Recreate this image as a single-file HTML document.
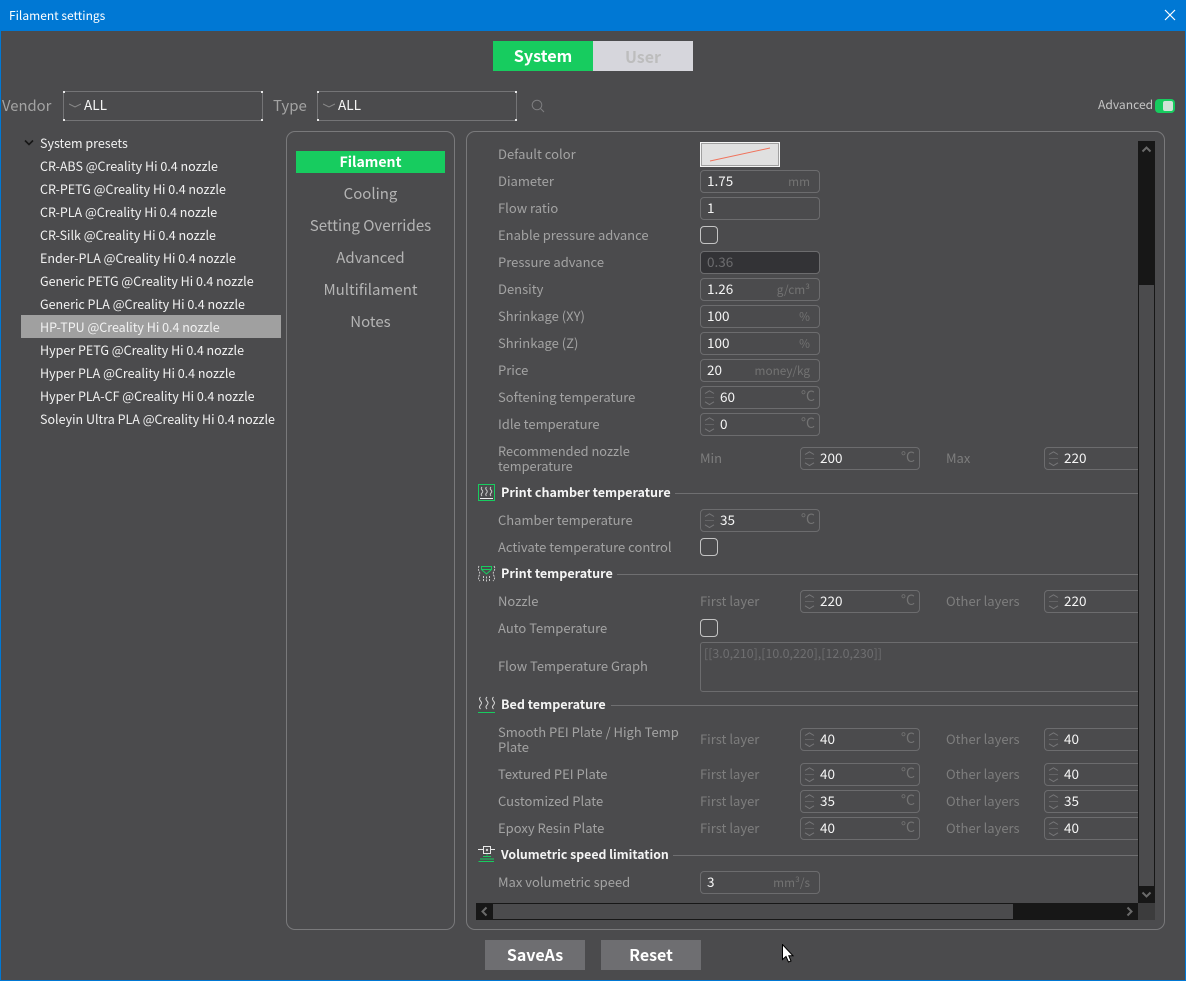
<!DOCTYPE html>
<html><head><meta charset="utf-8"><title>Filament settings</title>
<style>
html,body{margin:0;padding:0;width:1186px;height:981px;overflow:hidden;background:#4b4b4d}
body{position:relative;font-family:"Noto Sans CJK SC","Liberation Sans",sans-serif;font-size:13px;color:#a6a6a6}
div,span,svg{position:absolute;box-sizing:border-box}
.t{white-space:nowrap;line-height:20px;height:20px}
.w{color:#f2f2f2;left:40px;font-size:12.5px}
.l{left:498px;color:#a3a3a3}
.d{color:#7d7d7d}
.h{left:501px;color:#f4f4f4;font-weight:700;font-size:12.55px}
.m{left:296px;width:149px;text-align:center;font-size:15px;color:#b4b4b4}
.f{width:120px;height:23px;border:1px solid #6c6c6e;border-radius:4px}
.f b{position:absolute;left:6px;top:-1px;line-height:21px;font-weight:400;font-size:13.5px;color:#f4f4f4}
.f i{position:absolute;right:9px;top:0;line-height:21px;font-style:normal;font-size:11.8px;color:#737373}
.s b{left:19px}
.s i{right:4px;top:-1px;font-size:14px}
.f svg{left:2px;top:3px;width:14px;height:16px}
.c{left:700px;width:18px;height:18px;border:1.5px solid #c4c4c4;border-radius:4px}
.r{height:1px;background:#6f6f71}
.cb{width:200px;height:30px;top:91px;border:1px solid #747476}
.cb span{width:2px;height:2px;background:#e8e8e8}
.cb b{position:absolute;left:20px;top:1px;font-weight:400;line-height:22px;font-size:13.6px;color:#f4f4f4}
.cb svg{left:5px;top:10px;width:12px;height:8px}
.p{border:1px solid #79797b;border-radius:9px}
</style></head><body>
<svg width="0" height="0" style="left:0;top:0"><defs>
<g id="sp" fill="none" stroke="#767678" stroke-width="1"><path d="M2 3.500 L6.500 0.800 L11 3.500"/><path d="M2 7.500 H11" stroke="#636365"/><path d="M2 11.800 L6.500 14.500 L11 11.800"/></g>
</defs></svg>

<div style="left:0;top:0;width:1186px;height:31px;background:#0078d4"></div>
<div style="left:0;top:0;width:1px;height:981px;background:#0078d4"></div>
<div style="right:0;top:0;width:1px;height:981px;background:#0078d4"></div>
<div style="left:0;bottom:0;width:1186px;height:1px;background:#0078d4"></div>
<div class="t" style="left:9px;top:6px;color:#fff;font-size:12px">Filament settings</div>
<svg style="left:1164px;top:9px" width="12" height="12"><path d="M1 1 L11 11 M11 1 L1 11" stroke="#fff" stroke-width="1.2" fill="none"/></svg>

<div style="left:493px;top:41px;width:100px;height:30px;background:#17cc5f;color:#fff;font-weight:700;font-size:16.200px;line-height:28px;text-align:center">System</div>
<div style="left:593px;top:41px;width:100px;height:30px;background:#d6d6dc;color:#bdbdbd;font-weight:700;font-size:16px;line-height:30px;text-align:center">User</div>

<div class="t" style="left:2px;top:95px;font-size:14.800px;color:#a3a3a3;margin-top:1px">Vendor</div>
<div class="cb" style="left:63px"><span style="left:-1px;top:-1px"></span><span style="right:-1px;top:-1px"></span><span style="left:-1px;bottom:-1px"></span><span style="right:-1px;bottom:-1px"></span><svg><path d="M0 2 L6 5 L12 2" fill="none" stroke="#8a8a8a"/></svg><b>ALL</b></div>
<div class="t" style="left:273px;top:96px;font-size:15px;color:#a3a3a3">Type</div>
<div class="cb" style="left:317px"><span style="left:-1px;top:-1px"></span><span style="right:-1px;top:-1px"></span><span style="left:-1px;bottom:-1px"></span><span style="right:-1px;bottom:-1px"></span><svg><path d="M0 2 L6 5 L12 2" fill="none" stroke="#8a8a8a"/></svg><b>ALL</b></div>
<svg style="left:531px;top:99px" width="14" height="14"><circle cx="6" cy="6" r="4.800" fill="none" stroke="#7e7e80" stroke-width="1"/><path d="M9.500 9.500 L13 13" stroke="#7e7e80" stroke-width="1"/></svg>
<div class="t" style="left:1098px;top:95px;font-size:12.100px;color:#c4c4c4">Advanced</div>
<div style="left:1155px;top:99px;width:20px;height:14px;background:#17cc5f;border-radius:4px"></div>
<div style="left:1163px;top:101px;width:10px;height:10px;background:#cfe3d7;border-radius:2px"></div>

<svg style="left:24px;top:139px" width="10" height="8"><path d="M1 1.500 L5 5.500 L9 1.500" fill="none" stroke="#161616" stroke-width="1.600"/></svg>
<div style="left:21px;top:315px;width:260px;height:23px;background:#a0a0a0"></div>
<div class="t w" style="top:133px">System presets</div>
<div class="t w" style="top:156px">CR-ABS @Creality Hi 0.4 nozzle</div>
<div class="t w" style="top:179px">CR-PETG @Creality Hi 0.4 nozzle</div>
<div class="t w" style="top:202px">CR-PLA @Creality Hi 0.4 nozzle</div>
<div class="t w" style="top:225px">CR-Silk @Creality Hi 0.4 nozzle</div>
<div class="t w" style="top:248px">Ender-PLA @Creality Hi 0.4 nozzle</div>
<div class="t w" style="top:271px">Generic PETG @Creality Hi 0.4 nozzle</div>
<div class="t w" style="top:294px">Generic PLA @Creality Hi 0.4 nozzle</div>
<div class="t w" style="top:317px">HP-TPU @Creality Hi 0.4 nozzle</div>
<div class="t w" style="top:340px">Hyper PETG @Creality Hi 0.4 nozzle</div>
<div class="t w" style="top:363px">Hyper PLA @Creality Hi 0.4 nozzle</div>
<div class="t w" style="top:386px">Hyper PLA-CF @Creality Hi 0.4 nozzle</div>
<div class="t w" style="top:409px">Soleyin Ultra PLA @Creality Hi 0.4 nozzle</div>

<div class="p" style="left:286px;top:131px;width:169px;height:799px"></div>
<div style="left:296px;top:151px;width:149px;height:22px;background:#17cc5f"></div>
<div class="t m" style="top:152px;color:#fff;font-weight:700;font-size:14.100px">Filament</div>
<div class="t m" style="top:184px">Cooling</div>
<div class="t m" style="top:215px;font-size:15.100px">Setting Overrides</div>
<div class="t m" style="top:248px">Advanced</div>
<div class="t m" style="top:280px">Multifilament</div>
<div class="t m" style="top:312px">Notes</div>

<div class="p" style="left:466px;top:131px;width:699px;height:799px"></div>

<div style="left:476px;top:141px;width:662px;height:762px;overflow:hidden">
<div style="left:-476px;top:-141px;width:1186px;height:981px">

<div class="t l" style="top:144px">Default color</div>
<div style="left:700px;top:142px;width:80px;height:25px;background:#e0e0e0;border:1px solid #f4f4f4;box-shadow:inset 0 0 0 1px #a0a0a0"></div>
<svg style="left:700px;top:142px" width="80" height="25"><path d="M10 19 L70 6" stroke="#f0735c" stroke-width="1" fill="none"/></svg>

<div class="t l" style="top:171px">Diameter</div>
<div class="f" style="left:700px;top:170px"><b>1.75</b><i>mm</i></div>
<div class="t l" style="top:198px">Flow ratio</div>
<div class="f" style="left:700px;top:197px"><b>1</b></div>
<div class="t l" style="top:225px">Enable pressure advance</div>
<div class="c" style="top:226px"></div>
<div class="t l" style="top:252px">Pressure advance</div>
<div class="f" style="left:700px;top:251px;background:#333336"><b style="color:#6c6c6e">0.36</b></div>
<div class="t l" style="top:279px">Density</div>
<div class="f" style="left:700px;top:278px"><b>1.26</b><i>g/cm³</i></div>
<div class="t l" style="top:306px">Shrinkage (XY)</div>
<div class="f" style="left:700px;top:305px"><b>100</b><i>%</i></div>
<div class="t l" style="top:333px">Shrinkage (Z)</div>
<div class="f" style="left:700px;top:332px"><b>100</b><i>%</i></div>
<div class="t l" style="top:360px">Price</div>
<div class="f" style="left:700px;top:359px"><b>20</b><i>money/kg</i></div>
<div class="t l" style="top:387px">Softening temperature</div>
<div class="f s" style="left:700px;top:386px"><svg><use href="#sp"/></svg><b>60</b><i>°C</i></div>
<div class="t l" style="top:414px">Idle temperature</div>
<div class="f s" style="left:700px;top:413px"><svg><use href="#sp"/></svg><b>0</b><i>°C</i></div>
<div class="t l" style="top:441px;height:auto;line-height:15px;margin-top:2px;font-size:12.800px">Recommended nozzle<br>temperature</div>
<div class="t d" style="left:700px;top:448px">Min</div>
<div class="f s" style="left:800px;top:447px"><svg><use href="#sp"/></svg><b>200</b><i>°C</i></div>
<div class="t d" style="left:946px;top:448px">Max</div>
<div class="f s" style="left:1044px;top:447px"><svg><use href="#sp"/></svg><b>220</b><i>°C</i></div>

<svg style="left:478px;top:484px" width="18" height="18"><rect x="0.500" y="0.500" width="16" height="16" fill="none" stroke="#17cc5f"/><path d="M4 3 q-1.500 1.500 0 3 t0 3 t0 3 M8.500 3 q-1.500 1.500 0 3 t0 3 t0 3 M13 3 q-1.500 1.500 0 3 t0 3 t0 3" fill="none" stroke="#c8c8c8"/><path d="M2 14.500 H15" stroke="#f0f0f0"/></svg>
<div class="t h" style="top:482px">Print chamber temperature</div>
<div class="r" style="left:675px;top:493px;width:470px"></div>
<div class="t l" style="top:510px">Chamber temperature</div>
<div class="f s" style="left:700px;top:509px"><svg><use href="#sp"/></svg><b>35</b><i>°C</i></div>
<div class="t l" style="top:537px">Activate temperature control</div>
<div class="c" style="top:538px"></div>

<svg style="left:478px;top:565px" width="18" height="18"><path d="M3.500 1.500 H13.500 V4.500 L8.500 9 L3.500 4.500 Z M3.500 4.500 H13.500" fill="none" stroke="#17cc5f"/><path d="M1 1 q-1.500 2.500 0 5 t0 5 t1 5 M16 1 q1.500 2.500 0 5 t0 5 t-1 5 M5.500 11 v6 M8.500 11.500 v6 M11.500 11 v6" fill="none" stroke="#c8c8c8" stroke-dasharray="2 1"/></svg>
<div class="t h" style="top:563px">Print temperature</div>
<div class="r" style="left:617px;top:574px;width:530px"></div>
<div class="t l" style="top:591px">Nozzle</div>
<div class="t d" style="left:700px;top:591px">First layer</div>
<div class="f s" style="left:800px;top:590px"><svg><use href="#sp"/></svg><b>220</b><i>°C</i></div>
<div class="t d" style="left:946px;top:591px">Other layers</div>
<div class="f s" style="left:1044px;top:590px"><svg><use href="#sp"/></svg><b>220</b><i>°C</i></div>
<div class="t l" style="top:618px">Auto Temperature</div>
<div class="c" style="top:619px"></div>
<div class="t l" style="top:656px">Flow Temperature Graph</div>
<div style="left:700px;top:642px;width:460px;height:50px;border:1px solid #6c6c6e;border-radius:3px"></div>
<div class="t" style="left:704px;top:643px;color:#6e6e70;font-size:12.400px">[[3.0,210],[10.0,220],[12.0,230]]</div>

<svg style="left:478px;top:696px" width="18" height="18"><path d="M2.500 1 q-2 2 0 4 t0 4 t0 4 M9 1 q-2 2 0 4 t0 4 t0 4 M15.500 1 q-2 2 0 4 t0 4 t0 4" fill="none" stroke="#d4d4d4"/><path d="M0 16.500 H17" stroke="#17cc5f"/></svg>
<div class="t h" style="top:694px">Bed temperature</div>
<div class="r" style="left:611px;top:705px;width:540px"></div>
<div class="t l" style="top:722px;height:auto;line-height:15px;margin-top:2px">Smooth PEI Plate / High Temp<br>Plate</div>
<div class="t d" style="left:700px;top:729px">First layer</div>
<div class="f s" style="left:800px;top:728px"><svg><use href="#sp"/></svg><b>40</b><i>°C</i></div>
<div class="t d" style="left:946px;top:729px">Other layers</div>
<div class="f s" style="left:1044px;top:728px"><svg><use href="#sp"/></svg><b>40</b><i>°C</i></div>
<div class="t l" style="top:764px">Textured PEI Plate</div>
<div class="t d" style="left:700px;top:764px">First layer</div>
<div class="f s" style="left:800px;top:763px"><svg><use href="#sp"/></svg><b>40</b><i>°C</i></div>
<div class="t d" style="left:946px;top:764px">Other layers</div>
<div class="f s" style="left:1044px;top:763px"><svg><use href="#sp"/></svg><b>40</b><i>°C</i></div>
<div class="t l" style="top:791px">Customized Plate</div>
<div class="t d" style="left:700px;top:791px">First layer</div>
<div class="f s" style="left:800px;top:790px"><svg><use href="#sp"/></svg><b>35</b><i>°C</i></div>
<div class="t d" style="left:946px;top:791px">Other layers</div>
<div class="f s" style="left:1044px;top:790px"><svg><use href="#sp"/></svg><b>35</b><i>°C</i></div>
<div class="t l" style="top:818px">Epoxy Resin Plate</div>
<div class="t d" style="left:700px;top:818px">First layer</div>
<div class="f s" style="left:800px;top:817px"><svg><use href="#sp"/></svg><b>40</b><i>°C</i></div>
<div class="t d" style="left:946px;top:818px">Other layers</div>
<div class="f s" style="left:1044px;top:817px"><svg><use href="#sp"/></svg><b>40</b><i>°C</i></div>

<svg style="left:478px;top:846px" width="18" height="18"><path d="M0 3.500 H5 M13 3.500 H17" stroke="#e8e8e8"/><rect x="5.500" y="0.500" width="7" height="7" fill="none" stroke="#e8e8e8"/><circle cx="9" cy="4" r="1.200" fill="#cfcfcf"/><path d="M9 8 v1.500" stroke="#17cc5f"/><path d="M5 10.500 H13 M2 13 H16 M0.500 15.500 H16" stroke="#17cc5f" fill="none"/></svg>
<div class="t h" style="top:844px;font-size:12.300px">Volumetric speed limitation</div>
<div class="r" style="left:673px;top:855px;width:470px"></div>
<div class="t l" style="top:872px">Max volumetric speed</div>
<div class="f" style="left:700px;top:871px"><b>3</b><i>mm³/s</i></div>

</div></div>

<div style="left:1138px;top:141px;width:17px;height:762px;background:#171717"></div>
<div style="left:1139px;top:285px;width:15px;height:601px;background:#4b4b4d"></div>
<svg style="left:1138px;top:141px" width="17" height="17"><path d="M4.500 10.500 L8.500 6.500 L12.500 10.500" fill="none" stroke="#6a6a6a" stroke-width="2"/></svg>
<svg style="left:1138px;top:886px" width="17" height="17"><path d="M4.500 6.500 L8.500 10.500 L12.500 6.500" fill="none" stroke="#6a6a6a" stroke-width="2"/></svg>
<div style="left:476px;top:903px;width:662px;height:17px;background:#171717"></div>
<div style="left:493px;top:904px;width:520px;height:15px;background:#4b4b4d"></div>
<svg style="left:476px;top:903px" width="17" height="17"><path d="M10.500 4.500 L6.500 8.500 L10.500 12.500" fill="none" stroke="#6a6a6a" stroke-width="2"/></svg>
<svg style="left:1121px;top:903px" width="17" height="17"><path d="M6.500 4.500 L10.500 8.500 L6.500 12.500" fill="none" stroke="#6a6a6a" stroke-width="2"/></svg>
<div style="left:1138px;top:903px;width:17px;height:17px;background:#3c3c3d"></div>

<div style="left:485px;top:940px;width:100px;height:30px;background:#6e6e71;color:#fff;font-weight:700;font-size:16px;line-height:29px;text-align:center">SaveAs</div>
<div style="left:601px;top:940px;width:100px;height:30px;background:#6e6e71;color:#fff;font-weight:700;font-size:16px;line-height:29px;text-align:center">Reset</div>

<svg style="left:781px;top:944px" width="14" height="20"><path d="M1.500 0.500 V15.500 L5 12.500 L7.500 18 L10 17 L7.800 11.800 L12 11.800 Z" fill="#fff" stroke="#000" stroke-width="1"/></svg>
</body></html>
